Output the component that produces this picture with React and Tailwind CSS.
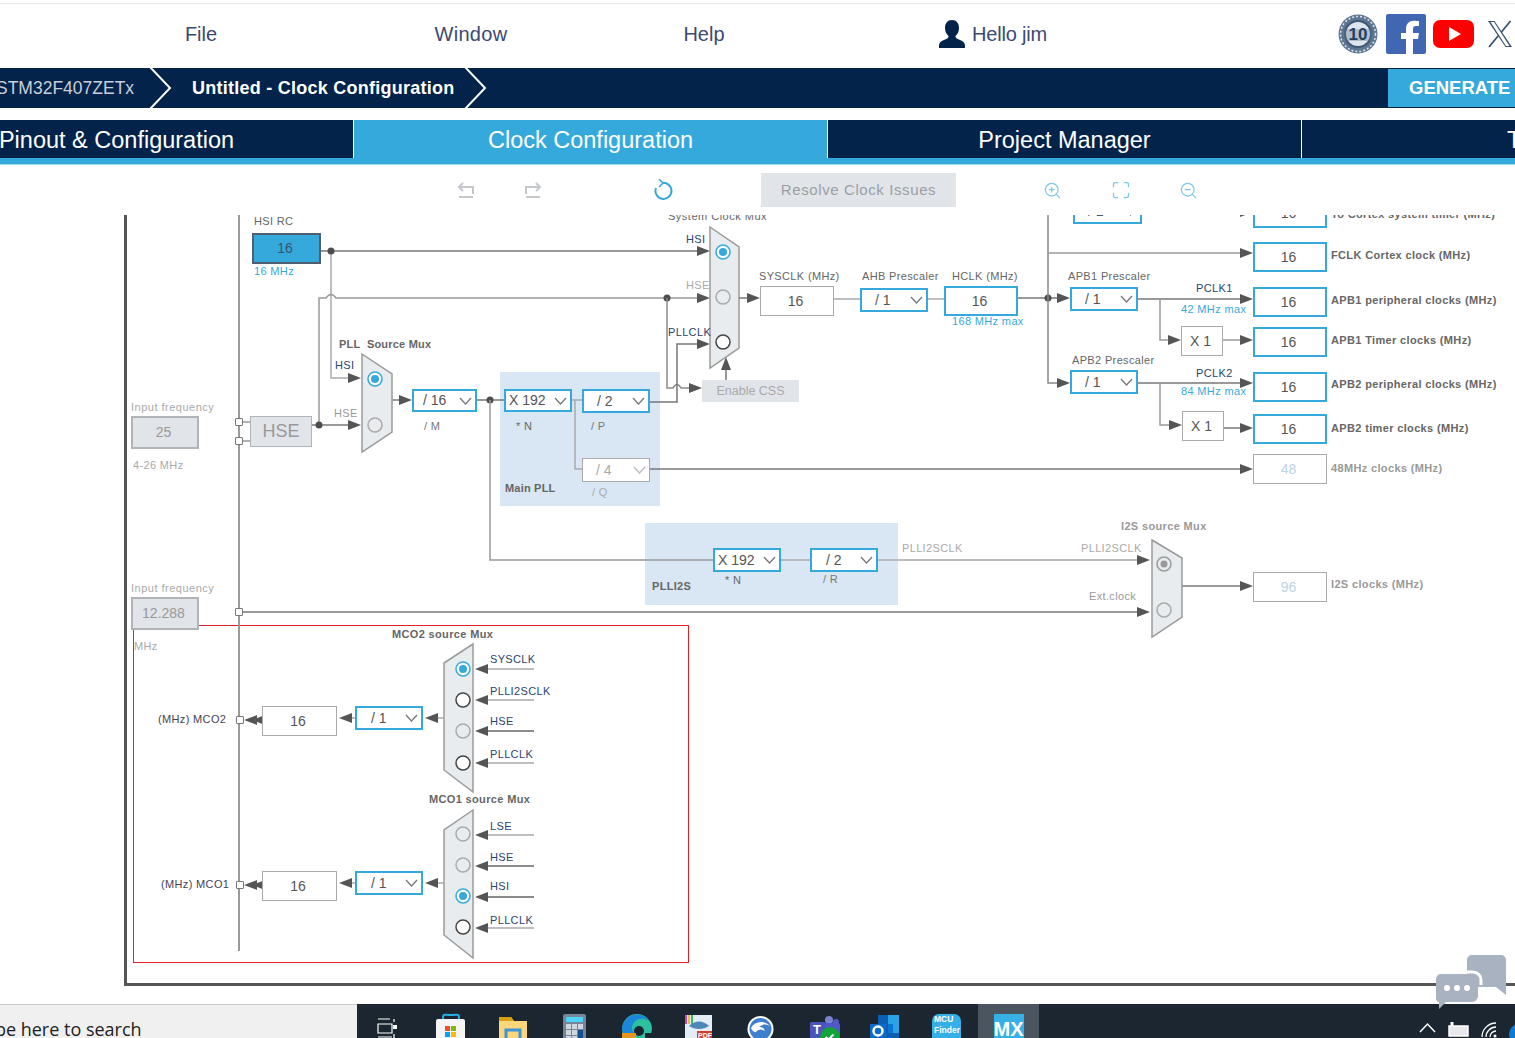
import React from "react";
import { ZoomIn, ZoomOut, Maximize } from "lucide-react";

const blue = "#36a9dc";
const navy = "#03234b";

// diagram helpers, all page coordinates (the canvas is scrolled 215px like the app's)
const Txt = ({ c, children }) => (
  <span
    className={`absolute whitespace-nowrap leading-[12px] text-[11px] ${
      c.includes("tracking-") ? "" : "tracking-[0.35px]"
    } ${c}`}
  >
    {children}
  </span>
);

const Chevron = ({ c = "#777" }) => (
  <svg className="absolute right-[3px] top-1/2 -translate-y-1/2 w-[13px] h-[8px]" viewBox="0 0 13 8">
    <polyline points="1,1 6.500,7 12,1" fill="none" stroke={c} strokeWidth="1.3" />
  </svg>
);

const Select = ({ c, label, off }) => (
  <div
    className={`absolute flex items-center bg-white text-[14px] ${
      off ? "border-[1.5px] border-[#aaa] text-[#aaa]" : "border-2 border-[#36a9dc] text-[#555]"
    } ${c}`}
  >
    {label}
    <Chevron c={off ? "#bbb" : "#777"} />
  </div>
);

const Box = ({ c, value, tone = "plain" }) => {
  const tones = {
    plain: "border-[1.5px] border-[#aaa] bg-white text-[#555]",
    active: "border-2 border-[#36a9dc] bg-white text-[#555]",
    off: "border-[1.5px] border-[#aaa] bg-white text-[#bcd3e6]",
    input: "border-2 border-[#b0b4b8] bg-[#e1e4e8] text-[#999]",
    hsi: "border-2 border-[#4f5f6f] bg-[#36a9dc] text-[#39526b]",
  };
  return (
    <div className={`absolute flex items-center justify-center pr-[3px] text-[14px] ${tones[tone]} ${c}`}>{value}</div>
  );
};

const Pin = ({ c }) => (
  <div className={`absolute w-[8px] h-[8px] bg-white border-[1.5px] border-[#777] rounded-[1px] ${c}`} />
);

const W = ({ p, c = "#777", w = 1.5 }) => <polyline points={p} fill="none" stroke={c} strokeWidth={w} />;

const Dot = ({ x, y }) => <circle cx={x} cy={y} r="3.5" fill="#4d4d4d" />;

const Arrow = ({ x, y, d = "r" }) => {
  const pts = {
    r: `${x},${y} ${x - 13},${y - 5} ${x - 13},${y + 5}`,
    l: `${x},${y} ${x + 13},${y - 5} ${x + 13},${y + 5}`,
    u: `${x},${y} ${x - 5},${y + 13} ${x + 5},${y + 13}`,
  };
  return <polygon points={pts[d]} fill="#555" />;
};

const Radio = ({ x, y, s = "off" }) => {
  if (s === "on")
    return (
      <g>
        <circle cx={x} cy={y} r="7" fill="white" stroke={blue} strokeWidth="1.5" />
        <circle cx={x} cy={y} r="4" fill={blue} />
      </g>
    );
  if (s === "mute")
    return (
      <g>
        <circle cx={x} cy={y} r="7" fill="#e9ecef" stroke="#999" strokeWidth="1.5" />
        <circle cx={x} cy={y} r="3.5" fill="#999" />
      </g>
    );
  return (
    <circle
      cx={x}
      cy={y}
      r="7"
      fill={s === "dark" ? "white" : "#e9ecef"}
      stroke={s === "dark" ? "#444" : "#aaa"}
      strokeWidth="1.5"
    />
  );
};

const Mux = ({ p }) => <polygon points={p} fill="#e9ecef" stroke="#9a9a9a" strokeWidth="1.5" />;

const Wires = () => (
  <svg className="absolute left-0 top-0 w-[1515px] h-[1004px]" viewBox="0 0 1515 1004">
    {/* frame bus */}
    <W p="239,215 239,951" c="#999" w={2} />

    {/* HSI */}
    <W p="321,251 700,251" />
    <W p="331,251 331,378 350,378" c="#aaa" />
    <Dot x={331} y={251} />
    <Arrow x={361} y={378} />
    <Arrow x={710} y={251} />
    {/* HSE */}
    <path d="M319 426 V298 H326 q5 -7 10 0 H700" fill="none" stroke="#999" strokeWidth="1.5" />
    <W p="243,422 250,422" c="#999" />
    <W p="243,441 250,441" c="#999" />
    <W p="312,425 350,425" />
    <Dot x={319} y={425} />
    <Arrow x={361} y={425} />
    <Arrow x={710} y={298} />
    <Dot x={667} y={298} />
    <path d="M667 298 V388 H673 q4 -7 8 0 H690" fill="none" stroke="#888" strokeWidth="1.5" />
    <Arrow x={702} y={388} />
    <W p="650,402 677,402 677,344 698,344" />
    <Arrow x={710} y={344} />
    <W p="726,380 726,365" />
    <Arrow x={726} y={357} d="u" />

    {/* PLL */}
    <W p="392,400 402,400" />
    <Arrow x={412} y={400} />
    <W p="476,400 505,400" />
    <Dot x={490} y={400} />
    <W p="490,400 490,560 714,560" c="#999" />
    <W p="571,400 583,400" c="#aaa" />
    <W p="575,400 575,469 583,469" c="#aaa" />
    <W p="650,469 1242,469" />
    <Arrow x={1253} y={469} />

    {/* PLLI2S */}
    <W p="780,560 810,560" c="#bbb" w={2} />
    <W p="878,560 1140,560" c="#bbb" w={2} />
    <Arrow x={1150} y={560} />
    <W p="243,612 1140,612" />
    <Arrow x={1150} y={612} />
    <W p="1182,586 1244,586" />
    <Arrow x={1253} y={586} />

    {/* muxes */}
    <Mux p="362,354 392,374 392,432 362,452" />
    <Radio x={375} y={379} s="on" />
    <Radio x={375} y={425} />
    <Mux p="710,227 739,247 739,348 710,368" />
    <Radio x={723} y={252} s="on" />
    <Radio x={723} y={297} />
    <Radio x={723} y={342} s="dark" />
    <Mux p="1152,540 1182,558 1182,617 1152,637" />
    <Radio x={1164} y={564} s="mute" />
    <Radio x={1164} y={610} />

    {/* bus to peripherals */}
    <W p="739,298 750,298" />
    <Arrow x={760} y={298} />
    <W p="834,299 861,299" c="#aaa" />
    <W p="928,299 944,299" c="#aaa" />
    <W p="1017,298 1060,298" />
    <Dot x={1048} y={298} />
    <Arrow x={1070} y={298} />
    <W p="1048,215 1048,383 1060,383" c="#888" />
    <Arrow x={1070} y={383} />
    <Arrow x={1253} y={212} />
    <W p="1048,253 1244,253" c="#999" />
    <Arrow x={1253} y={253} />
    <W p="1137,299 1244,299" />
    <Arrow x={1253} y={299} />
    <W p="1160,299 1160,340 1172,340" c="#999" />
    <Arrow x={1181} y={340} />
    <W p="1223,340 1244,340" c="#999" />
    <Arrow x={1253} y={340} />
    <W p="1137,383 1244,383" />
    <Arrow x={1253} y={383} />
    <W p="1160,383 1160,425 1172,425" c="#999" />
    <Arrow x={1182} y={425} />
    <W p="1224,428 1244,428" />
    <Arrow x={1253} y={428} />

    {/* red block muxes */}
    <Mux p="473,644 444,663 444,770 473,792" />
    <Radio x={463} y={669} s="on" />
    <Radio x={463} y={700} s="dark" />
    <Radio x={463} y={731} />
    <Radio x={463} y={763} s="dark" />
    <Mux p="473,810 444,830 444,935 473,958" />
    <Radio x={463} y={834} />
    <Radio x={463} y={865} />
    <Radio x={463} y={896} s="on" />
    <Radio x={463} y={927} s="dark" />
    {[669, 700, 731, 763, 835, 866, 897, 928].map((y) => (
      <g key={y}>
        <W p={`485,${y} 534,${y}`} c={y === 700 || y === 763 || y === 669 || y === 835 || y === 928 ? "#aaa" : "#666"} />
        <Arrow x={475} y={y} d="l" />
      </g>
    ))}
    {[718, 883].map((y) => (
      <g key={y}>
        <W p={`436,${y} 444,${y}`} c="#aaa" />
        <Arrow x={425} y={y} d="l" />
        <W p={`350,${y} 355,${y}`} c="#aaa" />
        <Arrow x={339} y={y} d="l" />
        <Arrow x={252} y={y + 2} d="l" />
        <Arrow x={244} y={y + 2} d="l" />
      </g>
    ))}
  </svg>
);

const Diagram = () => (
  <div className="relative h-[789px] overflow-hidden shrink-0">
    <div className="absolute left-0 top-[-215px] w-[1515px] h-[1004px]">
      <div className="absolute left-[124px] top-[200px] w-[1500px] h-[786px] border-l-[3px] border-b-[3px] border-[#555]" />
      <div className="absolute left-[500px] top-[372px] w-[160px] h-[134px] bg-[#d9e7f4]" />
      <div className="absolute left-[645px] top-[523px] w-[253px] h-[82px] bg-[#d9e7f4]" />
      <div className="absolute left-[133px] top-[625px] w-[556px] h-[338px] border border-[#e5202a]" />
      <Wires />

      <Txt c="left-[668px] top-[210px] text-[#666] tracking-[0.5px]">System Clock Mux</Txt>
      <Txt c="left-[254px] top-[215px] text-[#666]">HSI RC</Txt>
      <Box tone="hsi" c="left-[252px] top-[233px] w-[69px] h-[31px]" value="16" />
      <Txt c="left-[254px] top-[265px] text-[#36a9dc]">16 MHz</Txt>

      <Txt c="left-[131px] top-[401px] text-[#aaa] tracking-[0.5px]">Input frequency</Txt>
      <Box tone="input" c="left-[131px] top-[416px] w-[68px] h-[33px]" value="25" />
      <Txt c="left-[133px] top-[459px] text-[#aaa]">4-26 MHz</Txt>
      <Pin c="left-[235px] top-[418px]" />
      <Pin c="left-[235px] top-[437px]" />
      <div className="absolute left-[250px] top-[416px] w-[62px] h-[31px] flex items-center justify-center bg-[#e1e4e8] border-[1.5px] border-[#b0b4b8] text-[18px] text-[#999]">
        HSE
      </div>

      <Txt c="left-[339px] top-[338px] text-[#666] font-bold tracking-[0.2px]">PLL&nbsp; Source Mux</Txt>
      <Txt c="left-[335px] top-[359px] text-[#2a4570]">HSI</Txt>
      <Txt c="left-[334px] top-[407px] text-[#999]">HSE</Txt>
      <Select c="left-[412px] top-[389px] w-[65px] h-[23px] pl-[9px]" label="/ 16" />
      <Txt c="left-[424px] top-[420px] text-[#777]">/ M</Txt>

      <Select c="left-[504px] top-[389px] w-[68px] h-[23px] pl-[3px]" label="X 192" />
      <Txt c="left-[516px] top-[420px] text-[#666]">* N</Txt>
      <Select c="left-[582px] top-[389px] w-[68px] h-[24px] pl-[13px]" label="/ 2" />
      <Txt c="left-[591px] top-[420px] text-[#777]">/ P</Txt>
      <Select off c="left-[582px] top-[458px] w-[68px] h-[24px] pl-[13px]" label="/ 4" />
      <Txt c="left-[592px] top-[486px] text-[#aaa]">/ Q</Txt>
      <Txt c="left-[505px] top-[482px] text-[#666] font-bold tracking-[0.2px]">Main PLL</Txt>

      <Txt c="left-[686px] top-[233px] text-[#2a4570]">HSI</Txt>
      <Txt c="left-[686px] top-[279px] text-[#aaa]">HSE</Txt>
      <Txt c="left-[668px] top-[326px] text-[#2a4570]">PLLCLK</Txt>
      <div className="absolute left-[702px] top-[380px] w-[97px] h-[22px] bg-[#e1e4e8] flex items-center justify-center text-[12.5px] text-[#aaa]">
        Enable CSS
      </div>

      <Txt c="left-[759px] top-[270px] text-[#666]">SYSCLK (MHz)</Txt>
      <Box c="left-[760px] top-[286px] w-[74px] h-[30px]" value="16" />
      <Txt c="left-[862px] top-[270px] text-[#666]">AHB Prescaler</Txt>
      <Select c="left-[860px] top-[288px] w-[68px] h-[24px] pl-[13px]" label="/ 1" />
      <Txt c="left-[952px] top-[270px] text-[#666]">HCLK (MHz)</Txt>
      <Box tone="active" c="left-[944px] top-[286px] w-[74px] h-[30px]" value="16" />
      <Txt c="left-[952px] top-[315px] text-[#36a9dc]">168 MHz max</Txt>

      <Select c="left-[1073px] top-[199px] w-[69px] h-[25px] pl-[13px]" label="/ 1" />
      <Box tone="active" c="left-[1253px] top-[198px] w-[74px] h-[30px]" value="16" />
      <Txt c="left-[1331px] top-[208px] text-[#666] font-bold">To Cortex system timer (MHz)</Txt>

      <Box tone="active" c="left-[1253px] top-[242px] w-[74px] h-[30px]" value="16" />
      <Txt c="left-[1331px] top-[249px] text-[#666] font-bold">FCLK Cortex clock (MHz)</Txt>

      <Txt c="left-[1068px] top-[270px] text-[#666]">APB1 Prescaler</Txt>
      <Select c="left-[1070px] top-[287px] w-[68px] h-[24px] pl-[13px]" label="/ 1" />
      <Txt c="left-[1196px] top-[282px] text-[#2a4570]">PCLK1</Txt>
      <Txt c="left-[1181px] top-[303px] text-[#36a9dc]">42 MHz max</Txt>
      <Box tone="active" c="left-[1253px] top-[287px] w-[74px] h-[30px]" value="16" />
      <Txt c="left-[1331px] top-[294px] text-[#666] font-bold">APB1 peripheral clocks (MHz)</Txt>
      <Box c="left-[1181px] top-[326px] w-[42px] h-[30px]" value="X 1" />
      <Box tone="active" c="left-[1253px] top-[327px] w-[74px] h-[30px]" value="16" />
      <Txt c="left-[1331px] top-[334px] text-[#666] font-bold">APB1 Timer clocks (MHz)</Txt>

      <Txt c="left-[1072px] top-[354px] text-[#666]">APB2 Prescaler</Txt>
      <Select c="left-[1070px] top-[370px] w-[68px] h-[24px] pl-[13px]" label="/ 1" />
      <Txt c="left-[1196px] top-[367px] text-[#2a4570]">PCLK2</Txt>
      <Txt c="left-[1181px] top-[385px] text-[#36a9dc]">84 MHz max</Txt>
      <Box tone="active" c="left-[1253px] top-[372px] w-[74px] h-[30px]" value="16" />
      <Txt c="left-[1331px] top-[378px] text-[#666] font-bold">APB2 peripheral clocks (MHz)</Txt>
      <Box c="left-[1182px] top-[411px] w-[42px] h-[30px]" value="X 1" />
      <Box tone="active" c="left-[1253px] top-[414px] w-[74px] h-[30px]" value="16" />
      <Txt c="left-[1331px] top-[422px] text-[#666] font-bold">APB2 timer clocks (MHz)</Txt>
      <Box tone="off" c="left-[1253px] top-[454px] w-[74px] h-[30px]" value="48" />
      <Txt c="left-[1331px] top-[462px] text-[#999] font-bold">48MHz clocks (MHz)</Txt>

      <Select c="left-[713px] top-[548px] w-[68px] h-[24px] pl-[3px]" label="X 192" />
      <Txt c="left-[725px] top-[574px] text-[#666]">* N</Txt>
      <Select c="left-[810px] top-[548px] w-[68px] h-[24px] pl-[14px]" label="/ 2" />
      <Txt c="left-[823px] top-[573px] text-[#777]">/ R</Txt>
      <Txt c="left-[652px] top-[580px] text-[#666] font-bold tracking-[0.3px]">PLLI2S</Txt>
      <Txt c="left-[902px] top-[542px] text-[#aaa]">PLLI2SCLK</Txt>
      <Txt c="left-[1081px] top-[542px] text-[#aaa]">PLLI2SCLK</Txt>
      <Txt c="left-[1089px] top-[590px] text-[#999]">Ext.clock</Txt>
      <Txt c="left-[1121px] top-[520px] text-[#999] font-bold">I2S source Mux</Txt>
      <Box tone="off" c="left-[1253px] top-[572px] w-[74px] h-[30px]" value="96" />
      <Txt c="left-[1331px] top-[578px] text-[#999] font-bold">I2S clocks (MHz)</Txt>

      <Txt c="left-[131px] top-[582px] text-[#aaa] tracking-[0.5px]">Input frequency</Txt>
      <Box tone="input" c="left-[131px] top-[597px] w-[68px] h-[33px]" value="12.288" />
      <Pin c="left-[235px] top-[608px]" />
      <Txt c="left-[134px] top-[640px] text-[#aaa]">MHz</Txt>

      <Txt c="left-[392px] top-[628px] text-[#666] font-bold">MCO2 source Mux</Txt>
      <Txt c="left-[490px] top-[653px] text-[#2a4570]">SYSCLK</Txt>
      <Txt c="left-[490px] top-[685px] text-[#2a4570]">PLLI2SCLK</Txt>
      <Txt c="left-[490px] top-[715px] text-[#2a4570]">HSE</Txt>
      <Txt c="left-[490px] top-[748px] text-[#2a4570]">PLLCLK</Txt>
      <Select c="left-[355px] top-[706px] w-[68px] h-[24px] pl-[14px]" label="/ 1" />
      <Box c="left-[262px] top-[706px] w-[75px] h-[30px]" value="16" />
      <Pin c="left-[236px] top-[716px]" />
      <Txt c="left-[158px] top-[713px] text-[#445]">(MHz) MCO2</Txt>

      <Txt c="left-[429px] top-[793px] text-[#666] font-bold">MCO1 source Mux</Txt>
      <Txt c="left-[490px] top-[820px] text-[#2a4570]">LSE</Txt>
      <Txt c="left-[490px] top-[851px] text-[#2a4570]">HSE</Txt>
      <Txt c="left-[490px] top-[880px] text-[#2a4570]">HSI</Txt>
      <Txt c="left-[490px] top-[914px] text-[#2a4570]">PLLCLK</Txt>
      <Select c="left-[355px] top-[871px] w-[68px] h-[24px] pl-[14px]" label="/ 1" />
      <Box c="left-[262px] top-[871px] w-[75px] h-[30px]" value="16" />
      <Pin c="left-[236px] top-[881px]" />
      <Txt c="left-[161px] top-[878px] text-[#445]">(MHz) MCO1</Txt>
    </div>
  </div>
);

const Header = () => (
  <header className="flex items-center h-[65px] pb-[4px] text-[20px] text-[#3a4a72] border-t border-[#e8e8e8]">
    <span className="w-[402px] text-center">File</span>
    <span className="w-[138px] text-center tracking-[0.3px]">Window</span>
    <span className="w-[328px] text-center">Help</span>
    <svg className="ml-[70px] w-[28px] h-[30px] shrink-0" viewBox="0 0 28 30">
      <path d="M14 1c4.500 0 7 3.500 7 8 0 3.500-1.500 6.500-3.500 8 0 2 1 2.500 4 3.800 3 1.200 5.500 2.500 5.500 6.200v2H1v-2c0-3.700 2.500-5 5.500-6.200 3-1.300 4-1.800 4-3.800C8.500 15.500 7 12.500 7 9c0-4.500 2.500-8 7-8z" fill={navy} />
    </svg>
    <span className="ml-[6px] w-[75px] whitespace-nowrap tracking-[-0.2px]">Hello jim</span>
    <svg className="ml-[291px] w-[40px] h-[40px] shrink-0" viewBox="0 0 40 40">
      <circle cx="20" cy="20" r="19.500" fill="#5d7691" />
      <circle cx="20" cy="20" r="17.500" fill="none" stroke="#dfe5ec" strokeWidth="1.500" strokeDasharray="2 2" />
      <circle cx="20" cy="20" r="13" fill="#dfe5ec" stroke="#3f5875" strokeWidth="2" />
      <rect x="4" y="15" width="32" height="12" rx="1" fill="#5d7691" opacity="0.350" />
      <text x="20" y="26" textAnchor="middle" fontSize="17" fontWeight="700" fill="#24405f" fontFamily="Liberation Sans">10</text>
    </svg>
    <svg className="ml-[8px] w-[40px] h-[40px] shrink-0" viewBox="0 0 40 40">
      <rect width="40" height="40" rx="2" fill="#4267b2" />
      <path d="M27 40V25h5l1-6h-6v-4c0-2 1-3 3-3h3V7c-1 0-3-.300-5-.300-5 0-8 3-8 8V19h-5v6h5v15z" fill="white" />
    </svg>
    <svg className="ml-[7px] w-[41px] h-[30px] shrink-0" viewBox="0 0 41 30">
      <rect width="41" height="28" y="1" rx="7" fill="#f00" />
      <polygon points="16,8 16,22 28,15" fill="white" />
    </svg>
    <svg className="ml-[13px] w-[26px] h-[28px] shrink-0" viewBox="0 0 26 28">
      <path d="M1 1h6.500L25 27h-6.500zM3.500 2 19 26h3.500L7 2z" fill="#3a5472" fillRule="evenodd" />
      <path d="M23.500 1 14.500 12M11.500 15.500 2 27" stroke="#3a5472" strokeWidth="1.800" />
    </svg>
  </header>
);

const Sep = ({ c = "" }) => (
  <svg className={`w-[24px] h-[40px] shrink-0 ${c}`} viewBox="0 0 24 40">
    <polyline points="2,-1 22,20 2,41" fill="none" stroke="white" strokeWidth="2" />
  </svg>
);

const Breadcrumb = () => (
  <nav className="flex items-center h-[40px] bg-[#03234b] text-white">
    <span className="-ml-[4px] w-[152px] shrink-0 text-[17.500px] text-[#c8d0da]">STM32F407ZETx</span>
    <Sep />
    <span className="ml-[20px] text-[18px] font-bold tracking-[0.25px] whitespace-nowrap">Untitled - Clock Configuration</span>
    <Sep c="ml-[9px]" />
    <button className="ml-auto w-[127px] h-[38px] shrink-0 bg-[#36a9dc] text-left pl-[21px] text-[18.500px] font-bold whitespace-nowrap">
      GENERATE
    </button>
  </nav>
);

const Tabs = () => {
  const tabs = ["Pinout & Configuration", "Clock Configuration", "Project Manager", "Tools"];
  return (
    <div className="mt-[12px] h-[45px] bg-[#36a9dc] border-b border-[#9fd4ee]">
      <div className="flex h-[38px] -ml-[120px]">
        {tabs.map((t) => (
          <div
            key={t}
            className={`w-[474px] shrink-0 flex items-center justify-center pt-[3px] text-[23.500px] text-white border-r border-white ${
              t === "Clock Configuration" ? "bg-[#36a9dc]" : "bg-[#03234b]"
            } ${t === "Tools" ? "pr-[8px]" : ""}`}
          >
            {t}
          </div>
        ))}
      </div>
    </div>
  );
};

const Toolbar = () => (
  <div className="flex items-center h-[50px] shrink-0">
    <svg className="ml-[457px] w-[18px] h-[18px] shrink-0" viewBox="0 0 18 18" fill="none" stroke="#c4c8cc" strokeWidth="2">
      <path d="M16 13V6H3M6 2 2 6l4 4M2 16h14" />
    </svg>
    <svg className="ml-[49px] w-[18px] h-[18px] shrink-0" viewBox="0 0 18 18" fill="none" stroke="#c4c8cc" strokeWidth="2">
      <path d="M2 13V6h13M12 2l4 4-4 4M2 16h14" />
    </svg>
    <svg className="ml-[112px] w-[20px] h-[22px] shrink-0" viewBox="0 0 20 22" fill="none" stroke="#36a9dc" strokeWidth="2">
      <path d="M8 4a8 8 0 1 1-6 5" />
      <path d="M5 0l4 4-4 4" strokeWidth="1.500" />
    </svg>
    <button className="ml-[87px] w-[195px] h-[34px] bg-[#e1e4e8] text-[15px] text-[#9a9fa5] tracking-[0.6px]">
      Resolve Clock Issues
    </button>
    <ZoomIn className="ml-[87px] w-[19px] h-[19px] text-[#7cc6ea]" strokeWidth={1.5} />
    <Maximize className="ml-[49px] w-[20px] h-[20px] text-[#7cc6ea]" strokeWidth={1.5} />
    <ZoomOut className="ml-[48px] w-[19px] h-[19px] text-[#7cc6ea]" strokeWidth={1.5} />
  </div>
);

const Ic = ({ c, w, children }) => (
  <svg className={`shrink-0 h-[34px] ${c}`} width={w} viewBox={`0 0 ${w} 34`} fill="none">
    {children}
  </svg>
);

const Taskbar = () => (
  <div className="flex h-[34px] bg-[#1c2631] overflow-hidden">
    <div className="w-[357px] shrink-0 bg-[#f0f0f0] border-t border-[#ccc] overflow-hidden text-[18px] leading-[48px] text-[#222] font-['Open_Sans',sans-serif] whitespace-nowrap">
      <span className="-ml-[24px] inline-block">Type here to search</span>
    </div>
    <Ic c="ml-[20px]" w={21}>
      <path d="M1 15h12M1 20h14v9H1zM1 33h14M17 15v3M17 30v4" stroke="white" strokeWidth="1.200" />
      <rect x="16" y="21" width="4" height="4" fill="white" />
    </Ic>
    <Ic c="ml-[38px]" w={30}>
      <path d="M7 15c0-6 1-4 8-4s8-2 8 4" stroke="#27b0ea" strokeWidth="2" />
      <rect y="15" width="29" height="22" rx="2" fill="#f5f5f5" />
      <rect x="9" y="22" width="5" height="5" fill="#f25022" />
      <rect x="15" y="22" width="5" height="5" fill="#7fba00" />
      <rect x="9" y="28" width="5" height="5" fill="#00a4ef" />
      <rect x="15" y="28" width="5" height="5" fill="#ffb900" />
    </Ic>
    <Ic c="ml-[33px]" w={28}>
      <path d="M0 13h12l3 4h13v20H0z" fill="#fcd779" />
      <path d="M0 13h12l3 4H0z" fill="#d9a012" />
      <rect x="7" y="26" width="14" height="14" stroke="#3b95d8" strokeWidth="3" />
    </Ic>
    <Ic c="ml-[36px]" w={23}>
      <rect y="10" width="23" height="26" rx="2" fill="#75869a" />
      <rect x="3" y="13" width="17" height="5" fill="#4fd2f5" />
      <path d="M3 20h5v5H3zM9 20h5v5H9zM15 20h5v5h-5zM3 26h5v5H3zM9 26h5v5H9zM3 32h5v3H3zM9 32h5v3H9z" fill="#cfd6dd" />
      <rect x="15" y="26" width="5" height="8" fill="#14508f" />
    </Ic>
    <Ic c="ml-[36px]" w={30}>
      <circle cx="15" cy="25" r="15" fill="#2cc0a0" />
      <path d="M0 25a15 15 0 0 1 28-7c-5-5-14-4-17 2-2 3-1 8 3 11H5c-3-2-5-3-5-6z" fill="#1a87d8" />
      <circle cx="17" cy="27" r="5" fill="#1c2631" />
      <path d="M23 29h7v5h-7z" fill="#1c2631" />
      <rect y="29" width="14" height="5" fill="#e8941c" />
    </Ic>
    <Ic c="ml-[33px]" w={27}>
      <rect y="11" width="27" height="23" fill="#e4edf6" />
      <rect y="11" width="2" height="9" fill="#c944c2" />
      <rect x="3" y="11" width="2" height="9" fill="#e9c234" />
      <rect x="6" y="11" width="2" height="9" fill="#42b85a" />
      <path d="M4 22c6-6 14-6 20 0-6 4-14 4-20 0z" fill="#4e86b8" />
      <rect x="12" y="27" width="15" height="7" fill="#d33b2c" />
      <text x="13" y="33.500" fontSize="7" fontWeight="700" fill="white" fontFamily="Liberation Sans">PDF</text>
    </Ic>
    <Ic c="ml-[35px]" w={27}>
      <circle cx="13.500" cy="25" r="13" fill="white" />
      <circle cx="13.500" cy="25" r="11" fill="#3f7fd0" />
      <path d="M4 24c4-7 13-8 19-2-4-2-8-2-11 1 3 0 5 1 6 4-3-2-6-2-9 1-2 1-4-2-5-4z" fill="white" />
    </Ic>
    <Ic c="ml-[36px]" w={31}>
      <circle cx="19" cy="16" r="4" fill="#7b83d0" />
      <circle cx="26" cy="18" r="3" fill="#5059c9" />
      <rect x="14" y="19" width="16" height="15" rx="2" fill="#5059c9" />
      <rect y="18" width="15" height="16" rx="1" fill="#4b53bc" />
      <text x="3" y="30" fontSize="13" fontWeight="700" fill="white" fontFamily="Liberation Sans">T</text>
      <circle cx="20" cy="33" r="10" fill="#12a33a" />
      <path d="M15.500 33l3 2.500 5-5" stroke="white" strokeWidth="2" />
    </Ic>
    <Ic c="ml-[29px]" w={29}>
      <rect x="8" y="11" width="21" height="23" fill="#0d5fb4" />
      <path d="M18 11h11v9H18zM18 20h11v9H18z" fill="#2aa2e6" />
      <rect x="18" y="20" width="5" height="9" fill="#0a74d2" />
      <rect y="20" width="16" height="14" fill="#0a6cc9" />
      <circle cx="8" cy="27" r="4.500" stroke="white" strokeWidth="2.500" />
    </Ic>
    <div className="ml-[33px] w-[29px] h-[40px] mt-[10px] shrink-0 rounded-t-[7px] bg-[#36aee6] text-white text-[8.500px] font-bold leading-[11px] px-[2px]">
      MCU
      <br />
      Finder
    </div>
    <div className="ml-[17px] w-[61px] shrink-0 bg-[#4a5560] flex justify-center pt-[10px]">
      <div className="w-[30px] h-[30px] bg-[#36b0e5] text-white text-[20px] font-bold text-center leading-[30px]">MX</div>
    </div>
    <Ic c="ml-[380px]" w={17}>
      <polyline points="1,28 8.500,20 16,28" stroke="white" strokeWidth="1.500" />
    </Ic>
    <Ic c="ml-[12px]" w={21}>
      <rect x="1" y="22" width="19" height="10" stroke="white" strokeWidth="1.500" fill="white" fillOpacity="0.900" />
      <path d="M4 18v4" stroke="white" strokeWidth="3" />
    </Ic>
    <Ic c="ml-[12px]" w={16}>
      <path d="M1 33a14 14 0 0 1 14-14M5 33a10 10 0 0 1 10-10M9 33a6 6 0 0 1 6-6" stroke="white" strokeWidth="1.300" />
      <circle cx="14" cy="32" r="1.500" fill="white" />
    </Ic>
    <div className="ml-[12px] w-[20px] h-[20px] mt-[20px] rounded-full bg-[#0f7ad4] shrink-0" />
  </div>
);

const ChatBubble = () => (
  <svg className="absolute left-[1434px] top-[953px] w-[76px] h-[58px]" viewBox="0 0 76 58">
    <path d="M33 7a5 5 0 0 1 5-5h29a5 5 0 0 1 5 5v35l-10-8H33z" fill="#a8b2c0" />
    <path d="M30 19h9a8 8 0 0 1 8 8v5" fill="none" stroke="white" strokeWidth="3" />
    <path d="M7 21h31a6 6 0 0 1 6 6v16a6 6 0 0 1-6 6H12l-7 7v-7a4 4 0 0 1-3-5V26a5 5 0 0 1 5-5z" fill="#a8b2c0" />
    <circle cx="13" cy="35" r="3" fill="white" />
    <circle cx="23" cy="35" r="3" fill="white" />
    <circle cx="33" cy="35" r="3" fill="white" />
  </svg>
);

export default function App() {
  return (
    <div className="relative w-[1515px] h-[1038px] overflow-hidden bg-white pt-[3px] font-['Liberation_Sans',Arial,sans-serif]">
      <Header />
      <Breadcrumb />
      <Tabs />
      <Toolbar />
      <Diagram />
      <Taskbar />
      <ChatBubble />
    </div>
  );
}
